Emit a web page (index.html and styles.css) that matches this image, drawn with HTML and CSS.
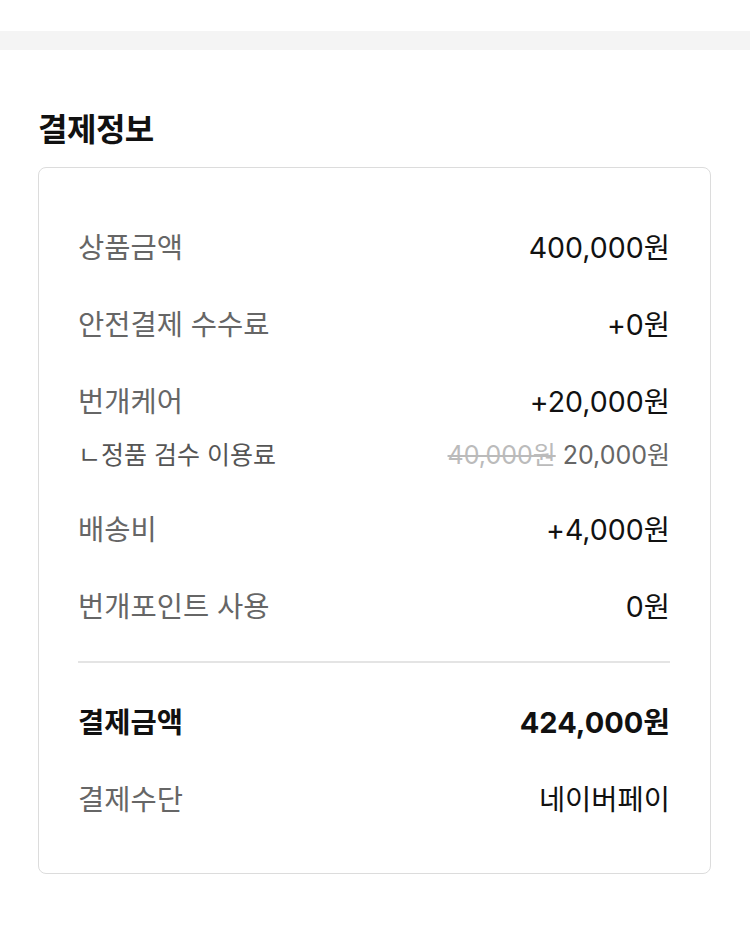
FILE: index.html
```html
<!DOCTYPE html>
<html lang="ko">
<head>
<meta charset="utf-8">
<link rel="stylesheet" href="styles.css">
</head>
<body>
<div class="top"></div>
<div class="band"></div>
<section class="section">
  <h2 class="title">결제정보</h2>
  <div class="card">
    <div class="rows">
      <div class="row"><span class="label">상품금액</span><span class="value">400,000원</span></div>
      <div class="row"><span class="label">안전결제 수수료</span><span class="value">+0원</span></div>
      <div class="group">
        <div class="row"><span class="label">번개케어</span><span class="value">+20,000원</span></div>
        <div class="row sub"><span class="label">ㄴ정품 검수 이용료</span><span class="value"><s class="old">40,000원</s> 20,000원</span></div>
      </div>
      <div class="row"><span class="label">배송비</span><span class="value">+4,000원</span></div>
      <div class="row"><span class="label">번개포인트 사용</span><span class="value">0원</span></div>
    </div>
    <hr class="divider">
    <div class="rows">
      <div class="row total"><span class="label">결제금액</span><span class="value">424,000원</span></div>
      <div class="row"><span class="label">결제수단</span><span class="value">네이버페이</span></div>
    </div>
  </div>
</section>
</body>
</html>
```
FILE: styles.css
```css
* { box-sizing: border-box; }
html, body { margin: 0; padding: 0; background: #fff; }
body {
  font-family: "Noto Sans CJK KR", "Noto Sans", sans-serif;
  color: #111;
}
.top { height: 31px; }
.band { height: 19px; background: #f4f4f4; }
.section { padding: 57px 38px 0 38px; }
.title {
  margin: 0;
  font-size: 32px;
  line-height: 40px;
  font-weight: 700;
  color: #111;
  letter-spacing: -0.5px;
}
.card {
  margin-top: 20px;
  width: 673px;
  border: 1px solid #dcdcdc;
  border-radius: 8px;
  padding: 57px 40px 56px 39px;
}
.rows { display: flex; flex-direction: column; gap: 37px; }
.row {
  display: flex;
  justify-content: space-between;
  align-items: center;
  height: 40px;
  font-size: 28.5px;
}
.label { color: #666; }
.value { font-family: "Inter", "Noto Sans CJK KR", sans-serif; color: #111; font-size: 28.5px; }
.sub { height: 34px; margin-top: 17px; font-size: 25px; }
.sub .label { color: #555; }
.sub .value { font-size: 25px; color: #666; }
.old { color: #bbb; text-decoration: line-through; }
.divider { border: 0; border-top: 2px solid #e4e4e4; margin: 37px 0 37px 0; }
.total .label, .total .value { color: #111; font-weight: 700; }
.total .value { font-size: 29px; }
```
